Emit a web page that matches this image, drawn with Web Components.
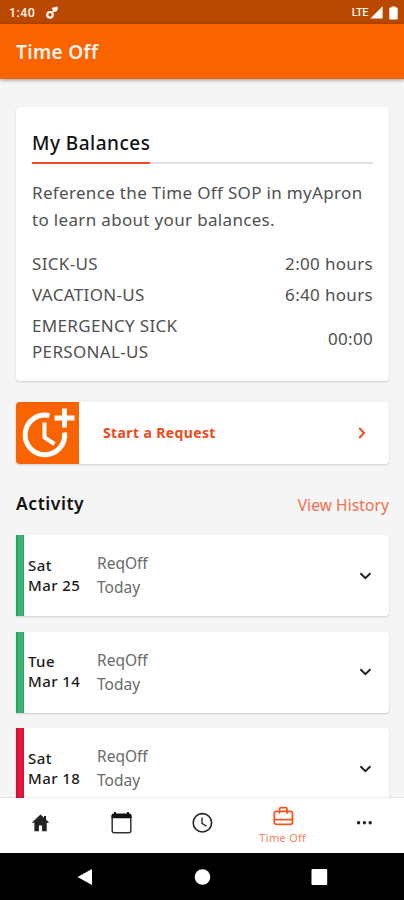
<!DOCTYPE html>
<html lang="en">
<head>
<meta charset="utf-8">
<title>Time Off</title>
<style>
html,body{margin:0;height:100%;overflow:hidden}
body{font-family:"Noto Sans","Open Sans",sans-serif;background:#f5f5f5;color:#111}
</style>
</head>
<body>
<time-off-app></time-off-app>
<script>
const define = (name, html) => {
  const t = document.createElement('template');
  t.innerHTML = html;
  customElements.define(name, class extends HTMLElement {
    constructor() { super(); this.attachShadow({mode: 'open'}).append(t.content.cloneNode(true)); }
  });
};

define('status-bar', `<style>
:host{display:flex;align-items:center;height:24px;box-sizing:border-box;padding:1px 6px 0 9px;background:#b94900;color:#fff3ec;font:500 12.5px Roboto,sans-serif}
.time{letter-spacing:.4px}.gear{margin-left:10px}.lte{margin-left:auto;font-size:11px;letter-spacing:-.45px;font-weight:500}
svg{display:block}.sig{margin-left:2px}.bat{margin-left:6px}
</style>
<span class="time">1:40</span>
<svg class="gear" width="14" height="14" viewBox="0 0 14 14" fill="none" stroke="#fff3ec"><circle cx="5" cy="8.8" r="2.8" stroke-width="2.2"/><path d="M7 6.5 9 4.5" stroke-width="1.5"/><path d="M6.8 2.5 8.2 1 9.5 1.6 10.8.4 12.6.8 13 3 11.5 5.4 9.8 6 7.8 4.6Z" fill="#fff3ec" stroke="none"/></svg>
<span class="lte">LTE</span>
<svg class="sig" width="13" height="13" viewBox="0 0 13 13"><path d="M12.6.3V12.4H.4Z" fill="#fff"/></svg>
<svg class="bat" width="9" height="14" viewBox="0 0 9 14"><path d="M2.5.5h4v1H8a.7.7 0 0 1 .7.7V12.8a.7.7 0 0 1-.7.7H1a.7.7 0 0 1-.7-.7V2.2A.7.7 0 0 1 1 1.5h1.5Z" fill="#fff"/></svg>`);

define('app-bar', `<style>
:host{display:flex;align-items:center;height:55px;padding:0 16px;background:#fa6400;color:#fff3ec;font-weight:600;font-size:19px;letter-spacing:.35px;box-shadow:0 1px 4px rgba(0,0,0,.4);position:relative}
</style><slot></slot>`);

define('ui-card', `<style>
:host{display:block;background:#fff;border-radius:4px;box-shadow:0 1px 2px rgba(0,0,0,.17)}
</style><slot></slot>`);

define('balance-row', `<style>
:host{display:flex;align-items:center;justify-content:space-between;padding:2.2px 0;line-height:26.5px}
</style><span><slot></slot></span><span><slot name="value"></slot></span>`);

define('balance-card', `<style>
:host{display:block}
ui-card{height:274px;box-sizing:border-box;padding:20px 16px 0}
header{height:37px;box-sizing:border-box;border-bottom:2px solid #e0e0e0;display:flex}
h2{margin:0;height:37px;box-sizing:border-box;border-bottom:2.5px solid #f04b23;font-weight:500;font-size:19px;letter-spacing:.48px;line-height:32px;color:#111}
.body{color:#505050;font-size:17px;font-weight:400;letter-spacing:.33px;line-height:26.5px;padding-top:16px}
p{margin:0 0 15.6px}
</style>
<ui-card>
<header><h2>My Balances</h2></header>
<div class="body">
<p>Reference the Time Off SOP in myApron<br>to learn about your balances.</p>
<balance-row>SICK-US<span slot="value">2:00 hours</span></balance-row>
<balance-row>VACATION-US<span slot="value">6:40 hours</span></balance-row>
<balance-row>EMERGENCY SICK<br>PERSONAL-US<span slot="value">00:00</span></balance-row>
</div></ui-card>`);

define('request-button', `<style>
:host{display:block}
ui-card{display:flex;align-items:center;height:62px;overflow:hidden;color:#ee4a1c;font-weight:700;font-size:14px;letter-spacing:.38px}
.tile{width:63px;height:62px;background:#fa6400;margin-right:24px}
.label{padding-bottom:2px}
.go{margin-left:auto;margin-right:22px}svg{display:block}
</style>
<ui-card>
<div class="tile"><svg width="63" height="62" viewBox="0 0 63 62" fill="none" stroke="#fff"><path d="M33.5 13.6A19.8 19.8 0 1 0 48.6 30.5" stroke-width="5"/><path d="M28.5 20.5V35.5L38.5 42" stroke-width="4"/><path d="M48.5 6.5V25.5M38.5 16H58.5" stroke-width="5"/></svg></div>
<span class="label">Start a Request</span>
<svg class="go" width="10" height="14" viewBox="0 0 10 14"><path d="M2.2 2 7 7 2.2 12" fill="none" stroke="#f04b23" stroke-width="2"/></svg>
</ui-card>`);

define('section-head', `<style>
:host{display:flex;justify-content:space-between;align-items:center;height:24px}
.t{font-weight:600;font-size:17.5px;letter-spacing:.55px;color:#111;padding-bottom:2px}.l{font-size:15.5px;letter-spacing:.1px;color:#f26f4b;padding-top:1px}
</style><span class="t"><slot></slot></span><span class="l"><slot name="link"></slot></span>`);

define('activity-item', `<style>
:host{display:block;--bar:#3cb371;--edge:#25a566}
:host([status=denied]){--bar:#e5173f;--edge:#cf1238}
ui-card{display:flex;align-items:center;height:81px;overflow:hidden;border-radius:0 4px 4px 0}
.bar{width:8px;box-sizing:border-box;border:solid var(--edge);border-width:0 1px 0 2px;height:100%;background:var(--bar)}
.date{width:69px;padding:0 0 2px 4px;box-sizing:border-box;font-size:15px;letter-spacing:.42px;line-height:20px;font-weight:500;color:#1b1b1b}
.what{font-size:15.5px;line-height:24px;color:#6a6a6a;padding:0 0 1px 4px}
svg{margin-left:auto;margin-right:17px;display:block}
</style>
<ui-card><div class="bar"></div>
<div class="date"><slot name="day"></slot><br><slot name="date"></slot></div>
<div class="what"><slot></slot><br><slot name="when"></slot></div>
<svg width="14" height="10" viewBox="0 0 14 10"><path d="M2.4 2.3 7.4 7.2 12.4 2.3" fill="none" stroke="#222" stroke-width="2"/></svg>
</ui-card>`);

define('tab-bar', `<style>
:host{display:grid;grid-template-columns:repeat(5,1fr);height:55px;background:#fff;box-shadow:0 -1px 1px rgba(0,0,0,.06);position:relative}
div{display:flex;flex-direction:column;align-items:center;justify-content:center;padding-bottom:5px}
.on{color:#f9805f;font-size:11px;letter-spacing:.3px;line-height:14px;padding:8px 0 0;justify-content:flex-start}
.on span{margin-top:3px}
svg{display:block}
</style>
<div><svg width="24" height="24" viewBox="0 0 24 24"><path d="M12.5 3.5 3.8 11.7h2.6V20.3h4.5V14.5h3.2v5.8h4.6V11.7h2.5L18 8.5V5h-2V6.8Z" fill="#222"/></svg></div>
<div><svg width="24" height="24" viewBox="0 0 24 24"><rect x="3.2" y="4" width="18.6" height="17.8" rx="2" fill="none" stroke="#333" stroke-width="1.5"/><path d="M2.5 4.5a2 2 0 0 1 2-2H5V1h2v1.5h11V1h2v1.5h.5a2 2 0 0 1 2 2V7.3H2.5Z" fill="#111"/></svg></div>
<div><svg width="24" height="24" viewBox="0 0 24 24" fill="none" stroke="#222" stroke-width="1.6"><circle cx="12.4" cy="11.8" r="9.2"/><path d="M12 6.5V12.3L16.5 15.3" stroke-width="1.3"/></svg></div>
<div class="on"><svg width="22" height="22" viewBox="0 0 22 22" fill="none" stroke="#f4561e" stroke-width="1.8"><rect x="2.3" y="5.3" width="18.2" height="13" rx="2"/><path d="M2 13.7h18.6M7.5 7.8V3.2a1.5 1.5 0 0 1 1.5-1.5h4.5A1.5 1.5 0 0 1 15 3.2V7.8"/></svg><span>Time Off</span></div>
<div><svg width="18" height="24" viewBox="0 0 18 24" fill="#222"><circle cx="3.6" cy="11.7" r="1.7"/><circle cx="9.4" cy="11.7" r="1.7"/><circle cx="15.2" cy="11.7" r="1.7"/></svg></div>`);

define('system-nav', `<style>
:host{display:flex;justify-content:center;height:47px;background:#000;position:relative}svg{display:block}
</style><svg width="404" height="47" viewBox="0 0 404 47" fill="#fff"><path d="M77.5 24 92 16V32Z"/><circle cx="202.5" cy="24" r="7.8"/><rect x="311.5" y="16" width="15.7" height="16" rx="1"/></svg>`);

define('time-off-app', `<style>
:host{display:flex;flex-direction:column;width:404px;height:900px;overflow:hidden;background:#f5f5f5}
main{flex:1;min-height:0;overflow:hidden;padding:28px 15px 0 16px}
request-button{margin-top:21px}
section-head{margin:28px 0 19px}
.list{display:flex;flex-direction:column;gap:15.5px}
</style>
<status-bar></status-bar>
<app-bar>Time Off</app-bar>
<main>
<balance-card></balance-card>
<request-button></request-button>
<section-head>Activity<span slot="link">View History</span></section-head>
<div class="list">
<activity-item><span slot="day">Sat</span><span slot="date">Mar 25</span>ReqOff<span slot="when">Today</span></activity-item>
<activity-item><span slot="day">Tue</span><span slot="date">Mar 14</span>ReqOff<span slot="when">Today</span></activity-item>
<activity-item status="denied"><span slot="day">Sat</span><span slot="date">Mar 18</span>ReqOff<span slot="when">Today</span></activity-item>
</div>
</main>
<tab-bar></tab-bar>
<system-nav></system-nav>`);
</script>
</body>
</html>
